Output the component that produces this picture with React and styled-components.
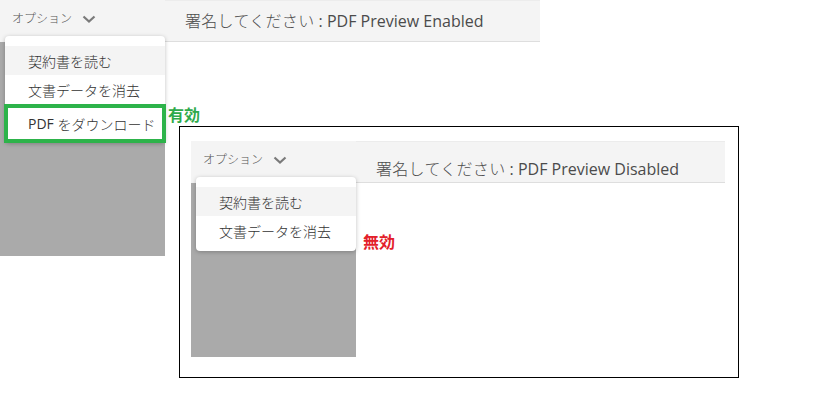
import styled, { createGlobalStyle } from "styled-components";

const GlobalStyle = createGlobalStyle`
  html, body {
    margin: 0;
    padding: 0;
    background: #fff;
  }
  body {
    font-family: "Open Sans", "Noto Sans CJK JP", sans-serif;
    color: #333;
  }
`;

const menuItems = ["契約書を読む", "文書データを消去"];

const Chevron = () => (
  <svg width="14" height="8" viewBox="0 0 14 8">
    <path d="M1.5 1.5 L7 6.5 L12.5 1.5" fill="none" stroke="#7a7a7a" strokeWidth="2.2" />
  </svg>
);

const Shot = ({ width, height, titleTop, title, download, label, labelColor, labelTop, labelGap }) => {
  return (
    <ShotGrid $width={width} $height={height}>
      <Options>
        オプション
        <Chevron />
      </Options>
      <Title $top={titleTop}>
        <Jp>署名してください</Jp> : {title}
      </Title>
      <Sidebar />
      <Content />
      <Menu>
        {menuItems.map((text, i) => (
          <Item key={text} $active={i === 0}>
            {text}
          </Item>
        ))}
        {download && (
          <Item $marked>
            <Latin>PDF</Latin>&nbsp;をダウンロード
          </Item>
        )}
        <Note $color={labelColor} $top={labelTop} $gap={labelGap}>
          {label}
        </Note>
      </Menu>
    </ShotGrid>
  );
};

const App = () => {
  return (
    <Page>
      <GlobalStyle />
      <Shot
        width={540}
        height={256}
        titleTop={10}
        title="PDF Preview Enabled"
        download
        label="有効"
        labelColor="#2eaa4a"
        labelTop={69}
        labelGap={3}
      />
      <Frame>
        <Shot
          width={534}
          height={216}
          titleTop={17}
          title="PDF Preview Disabled"
          label="無効"
          labelColor="#e3202a"
          labelTop={55}
          labelGap={7}
        />
      </Frame>
    </Page>
  );
};

const Page = styled.div`
  width: 829px;
  height: 420px;
  overflow: hidden;
`;

const ShotGrid = styled.div`
  position: relative;
  width: ${(p) => p.$width}px;
  height: ${(p) => p.$height}px;
  display: grid;
  grid-template-columns: 165px 1fr;
  grid-template-rows: 42px 1fr;
  background: #fff;
`;

const Options = styled.div`
  background: #f4f4f4;
  display: flex;
  align-items: center;
  gap: 10px;
  padding: 0 0 6px 12px;
  font-size: 12px;
  font-weight: 300;
  color: #555;
  svg {
    margin-top: 1px;
  }
`;

const Title = styled.div`
  background: #f4f4f4;
  border-top: 1px solid #ececec;
  border-bottom: 1px solid #dedede;
  padding: ${(p) => p.$top}px 0 0 20px;
  font-size: 16px;
  line-height: 20px;
  color: #4b4b4b;
  white-space: nowrap;
`;

const Jp = styled.span`
  font-weight: 300;
  letter-spacing: 0.3px;
`;

const Latin = styled.span`
  font-weight: 400;
`;

const Sidebar = styled.div`
  background: #aaaaaa;
`;

const Content = styled.div`
  background: #fff;
`;

const Menu = styled.div`
  position: absolute;
  left: 5px;
  top: 36px;
  width: 160px;
  box-sizing: border-box;
  padding: 10px 0 6px;
  background: #fff;
  border-radius: 4px;
  box-shadow: 0 1px 4px rgba(0, 0, 0, 0.25);
`;

const Item = styled.div`
  height: ${(p) => (p.$marked ? 39 : 29)}px;
  box-sizing: border-box;
  display: flex;
  align-items: center;
  padding-left: ${(p) => (p.$marked ? 20 : 23)}px;
  font-size: 14px;
  font-weight: 300;
  color: #333;
  white-space: nowrap;
  background: ${(p) => (p.$active ? "#f4f4f4" : "transparent")};
  border: ${(p) => (p.$marked ? "4px solid #2db34a" : "none")};
  margin: ${(p) => (p.$marked ? "0 -1px -6px" : "0")};
`;

const Note = styled.div`
  position: absolute;
  left: calc(100% + ${(p) => p.$gap}px);
  top: ${(p) => p.$top}px;
  font-size: 16px;
  line-height: 18px;
  font-weight: 700;
  white-space: nowrap;
  color: ${(p) => p.$color};
  font-family: "Noto Sans CJK JP", sans-serif;
`;

const Frame = styled.div`
  width: 560px;
  height: 252px;
  box-sizing: border-box;
  margin: -130px 0 0 179px;
  padding: 14px 0 0 11px;
  border: 1px solid #000;
  background: #fff;
  position: relative;
`;

export default App;
